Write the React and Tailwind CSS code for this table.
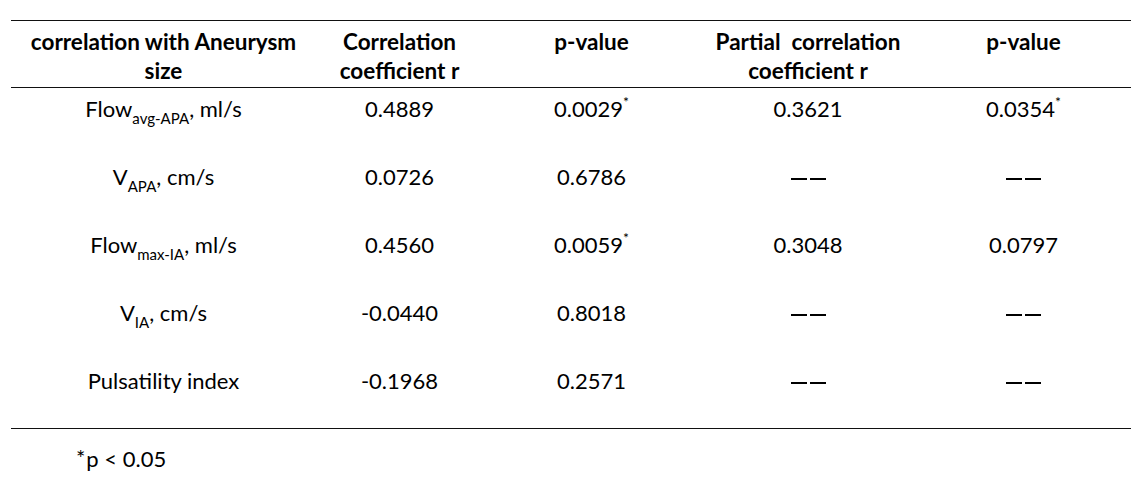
import React from "react";

const cols = ["w-[305px]", "w-[167px]", "w-[217px]", "w-[216px]", "w-[215px]"];

function Sup() {
  return <sup className="text-[14px] relative top-[-2px] align-super leading-none">*</sup>;
}

function Sub({ children }) {
  return <sub className="text-[15px] leading-none align-[-3px]">{children}</sub>;
}

const Dash = () => (
  <span className="inline-flex gap-[3px] align-middle">
    <span className="block w-[16px] h-[2px] bg-black" />
    <span className="block w-[16px] h-[2px] bg-black" />
  </span>
);

const rows = [
  [<>Flow<Sub>avg-APA</Sub>, ml/s</>, "0.4889", <>0.0029<Sup /></>, "0.3621", <>0.0354<Sup /></>],
  [<>V<Sub>APA</Sub>, cm/s</>, "0.0726", "0.6786", <Dash />, <Dash />],
  [<>Flow<Sub>max-IA</Sub>, ml/s</>, "0.4560", <>0.0059<Sup /></>, "0.3048", "0.0797"],
  [<>V<Sub>IA</Sub>, cm/s</>, "-0.0440", "0.8018", <Dash />, <Dash />],
  ["Pulsatility index", "-0.1968", "0.2571", <Dash />, <Dash />],
];

const header = [
  <>correlation with Aneurysm<br />size</>,
  <>Correlation<br />coefficient r</>,
  <>p-value</>,
  <>Partial&nbsp; correlation<br />coefficient r</>,
  <>p-value</>,
];

export default function App() {
  return (
    <div className="w-[1143px] h-[489px] bg-white text-black font-['Lato','Open_Sans',sans-serif] text-[22px]">
      <div className="pt-[20px] pl-[11px]">
        <div className="w-[1120px] border-t-[1.5px] border-b-[1.5px] border-[#111]">
          <div className="flex border-b-[1.5px] border-[#111] pt-[6px] pb-[2px] font-bold leading-[29px] text-[22.5px]">
            {header.map((h, i) => (
              <div key={i} className={`${cols[i]} text-center`}>{h}</div>
            ))}
          </div>
          {rows.map((r, ri) => (
            <div key={ri} className="flex h-[68px] pt-[8px] leading-[26px]">
              {r.map((c, ci) => (
                <div key={ci} className={`${cols[ci]} text-center`}>{c}</div>
              ))}
            </div>
          ))}
        </div>
        <div className="pl-[65px] pt-[17px] leading-[26px]">
          <span className="relative top-[-1px] text-[22px] mr-[1px]">*</span>p &lt; 0.05
        </div>
      </div>
    </div>
  );
}
